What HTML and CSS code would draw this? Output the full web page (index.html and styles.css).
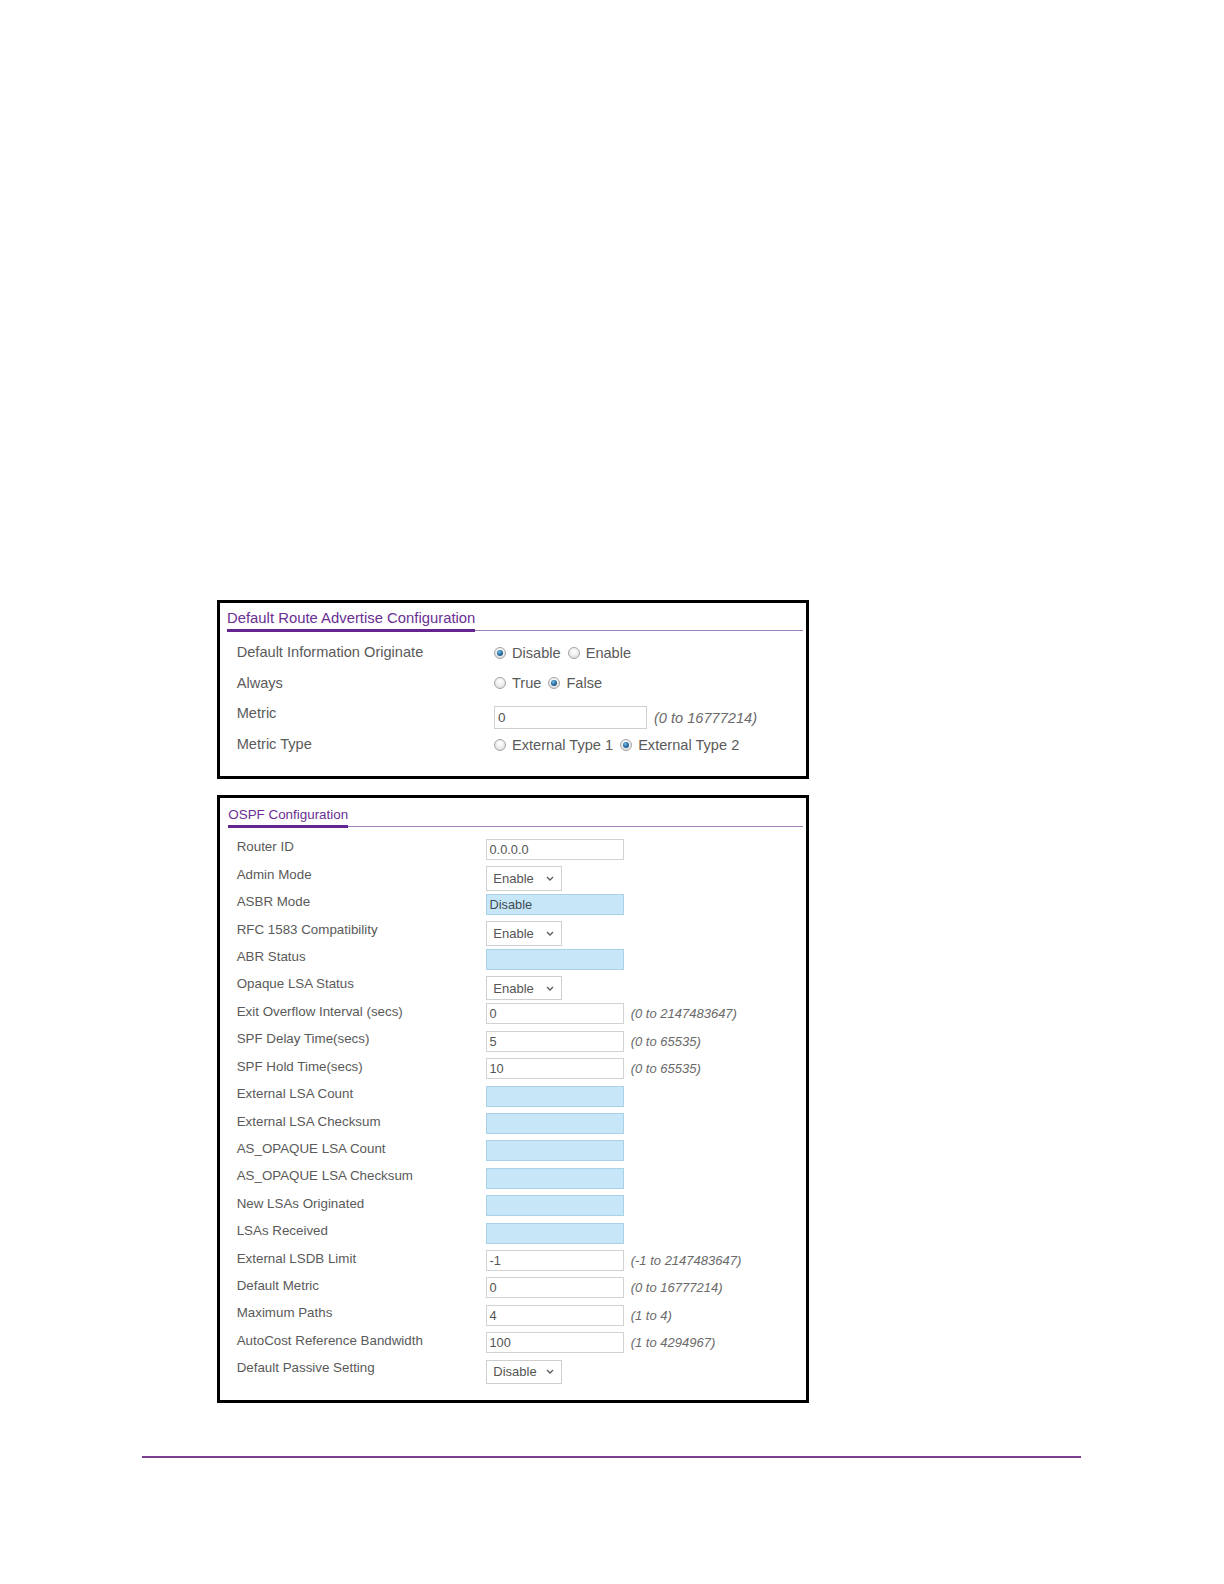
FILE: index.html
```html
<!DOCTYPE html>
<html lang="en">
<head>
<meta charset="utf-8">
<title>OSPF Configuration</title>
<link rel="stylesheet" href="styles.css">
</head>
<body>
<div class="page">
  <section class="panel panel-top">
    <div class="hdr hdr-top"><span class="ttl">Default Route Advertise Configuration</span><span class="rule"></span></div>
    <div class="rows-top">
      <div class="lbl">Default Information Originate</div>
      <div class="val v1"><span class="opt"><span class="radio on"></span>Disable</span><span class="opt"><span class="radio"></span>Enable</span></div>
      <div class="lbl">Always</div>
      <div class="val v2"><span class="opt"><span class="radio"></span>True</span><span class="opt"><span class="radio on"></span>False</span></div>
      <div class="lbl">Metric</div>
      <div class="val v3"><span class="inp-top">0</span><span class="hint-top">(0 to 16777214)</span></div>
      <div class="lbl">Metric Type</div>
      <div class="val v4"><span class="opt"><span class="radio"></span>External Type 1</span><span class="opt"><span class="radio on"></span>External Type 2</span></div>
    </div>
  </section>

  <section class="panel panel-bot">
    <div class="hdr hdr-bot"><span class="ttl">OSPF Configuration</span><span class="rule"></span></div>
    <div class="rows-bot">
      <div class="lbl">Router ID</div>
      <div class="ctl"><span class="fld">0.0.0.0</span></div>
      <div class="lbl">Admin Mode</div>
      <div class="ctl"><span class="sel">Enable<svg class="chev" viewBox="0 0 8 5" width="8" height="5"><polyline points="1,1 4,4 7,1"/></svg></span></div>
      <div class="lbl">ASBR Mode</div>
      <div class="ctl"><span class="fld ro">Disable</span></div>
      <div class="lbl">RFC 1583 Compatibility</div>
      <div class="ctl"><span class="sel">Enable<svg class="chev" viewBox="0 0 8 5" width="8" height="5"><polyline points="1,1 4,4 7,1"/></svg></span></div>
      <div class="lbl">ABR Status</div>
      <div class="ctl"><span class="fld ro"></span></div>
      <div class="lbl">Opaque LSA Status</div>
      <div class="ctl"><span class="sel">Enable<svg class="chev" viewBox="0 0 8 5" width="8" height="5"><polyline points="1,1 4,4 7,1"/></svg></span></div>
      <div class="lbl">Exit Overflow Interval (secs)</div>
      <div class="ctl"><span class="fld">0</span><span class="hint">(0 to 2147483647)</span></div>
      <div class="lbl">SPF Delay Time(secs)</div>
      <div class="ctl"><span class="fld">5</span><span class="hint">(0 to 65535)</span></div>
      <div class="lbl">SPF Hold Time(secs)</div>
      <div class="ctl"><span class="fld">10</span><span class="hint">(0 to 65535)</span></div>
      <div class="lbl">External LSA Count</div>
      <div class="ctl"><span class="fld ro"></span></div>
      <div class="lbl">External LSA Checksum</div>
      <div class="ctl"><span class="fld ro"></span></div>
      <div class="lbl">AS_OPAQUE LSA Count</div>
      <div class="ctl"><span class="fld ro"></span></div>
      <div class="lbl">AS_OPAQUE LSA Checksum</div>
      <div class="ctl"><span class="fld ro"></span></div>
      <div class="lbl">New LSAs Originated</div>
      <div class="ctl"><span class="fld ro"></span></div>
      <div class="lbl">LSAs Received</div>
      <div class="ctl"><span class="fld ro"></span></div>
      <div class="lbl">External LSDB Limit</div>
      <div class="ctl"><span class="fld">-1</span><span class="hint">(-1 to 2147483647)</span></div>
      <div class="lbl">Default Metric</div>
      <div class="ctl"><span class="fld">0</span><span class="hint">(0 to 16777214)</span></div>
      <div class="lbl">Maximum Paths</div>
      <div class="ctl"><span class="fld">4</span><span class="hint">(1 to 4)</span></div>
      <div class="lbl">AutoCost Reference Bandwidth</div>
      <div class="ctl"><span class="fld">100</span><span class="hint">(1 to 4294967)</span></div>
      <div class="lbl">Default Passive Setting</div>
      <div class="ctl"><span class="sel">Disable<svg class="chev" viewBox="0 0 8 5" width="8" height="5"><polyline points="1,1 4,4 7,1"/></svg></span></div>
    </div>
  </section>

  <div class="footer-rule"></div>
</div>
</body>
</html>
```

FILE: styles.css
```css
html, body {
  margin: 0;
  padding: 0;
  background: #ffffff;
}

body {
  font-family: "Liberation Sans", Arial, sans-serif;
  color: #585858;
}

.page {
  padding-top: 600px;
  padding-bottom: 40px;
}

.panel {
  margin-left: 217px;
  width: 592px;
  box-sizing: border-box;
  border: 3px solid #000;
  background: #fff;
}

.panel-bot {
  margin-top: 15.5px;
}

/* header with thick underline + thin rule */
.hdr {
  display: flex;
  align-items: flex-end;
  margin-right: 3px;
}

.hdr .ttl {
  color: #6a2f93;
  border-bottom: 3px solid #65258e;
  white-space: nowrap;
}

.hdr .rule {
  flex: 1;
  border-bottom: 1px solid #a07fbb;
  margin-bottom: 1px;
}

.hdr-top {
  margin-left: 7px;
  padding-top: 5.6px;
}

.hdr-top .ttl {
  font-size: 14.85px;
  line-height: 18px;
  padding-bottom: 2.7px;
}

.hdr-bot {
  margin-left: 8.3px;
  padding-top: 9.4px;
}

.hdr-bot .ttl {
  font-size: 13.4px;
  line-height: 16px;
  padding-bottom: 1.6px;
}

/* top panel rows */
.rows-top {
  display: grid;
  grid-template-columns: 257.3px 1fr;
  grid-template-rows: 31px 30.4px 31.3px auto;
  padding-left: 16.7px;
  margin-top: 10.3px;
  padding-bottom: 22.4px;
  font-size: 14.6px;
  line-height: 18px;
}

.rows-top .lbl {
  color: #5a5a5a;
  white-space: nowrap;
}

.val {
  display: flex;
  align-items: center;
  align-self: start;
  color: #5a5a5a;
  white-space: nowrap;
}

.v1 { margin-top: 1.4px; }
.v2 { margin-top: 0.4px; }
.v3 { margin-top: 2px; }
.v4 { margin-top: 0.8px; }

.opt {
  display: inline-flex;
  align-items: center;
  gap: 6px;
  margin-right: 7px;
}

.radio {
  position: relative;
  width: 12px;
  height: 12px;
  box-sizing: border-box;
  border-radius: 50%;
  border: 1px solid #a4a4a4;
  background: radial-gradient(circle at 50% 35%, #ffffff 0%, #ececec 55%, #d2d2d2 100%);
  flex: none;
}

.radio.on::after {
  content: "";
  position: absolute;
  left: 2px;
  top: 2px;
  width: 6px;
  height: 6px;
  border-radius: 50%;
  background: radial-gradient(circle at 40% 35%, #7cc0e6 0%, #2a73a8 45%, #143f66 100%);
}

.inp-top {
  display: block;
  width: 153.3px;
  height: 23.3px;
  box-sizing: border-box;
  border: 1px solid #cfcfcf;
  padding-left: 3px;
  font-size: 13.5px;
  line-height: 21.3px;
  color: #555;
}

.hint-top {
  margin-left: 6.7px;
  font-style: italic;
  color: #6a6a6a;
}

/* bottom panel rows */
.rows-bot {
  display: grid;
  grid-template-columns: 249.3px 1fr;
  grid-template-rows: repeat(20, 27.42px);
  padding-left: 16.7px;
  margin-top: 11px;
  padding-bottom: 12.6px;
  font-size: 13.35px;
}

.rows-bot .lbl {
  line-height: 16px;
  margin-top: 0.5px;
  color: #5a5a5a;
  white-space: nowrap;
}

.ctl {
  display: flex;
  align-items: center;
  align-self: start;
}

.fld {
  display: block;
  width: 138.3px;
  height: 21px;
  box-sizing: border-box;
  border: 1px solid #d2d2d2;
  background: #fff;
  padding-left: 2.5px;
  font-size: 12.8px;
  line-height: 19px;
  color: #555;
}

.fld.ro {
  background: #c7e7f9;
  border-color: #a9d1e8;
  color: #404a52;
}

.sel {
  display: flex;
  align-items: center;
  justify-content: space-between;
  width: 76.3px;
  height: 24.5px;
  box-sizing: border-box;
  border: 1px solid #cfcfcf;
  background: #fff;
  padding-left: 6.3px;
  padding-right: 7.5px;
  font-size: 13px;
  color: #555;
}

.chev {
  display: block;
  fill: none;
  stroke: #5a5a5a;
  stroke-width: 1.3;
}

.hint {
  margin-left: 6.4px;
  font-size: 13px;
  font-style: italic;
  color: #6a6a6a;
  white-space: nowrap;
}

.footer-rule {
  margin-top: 53px;
  margin-left: 142px;
  width: 939px;
  height: 2px;
  background: #7b3f8f;
}
```
